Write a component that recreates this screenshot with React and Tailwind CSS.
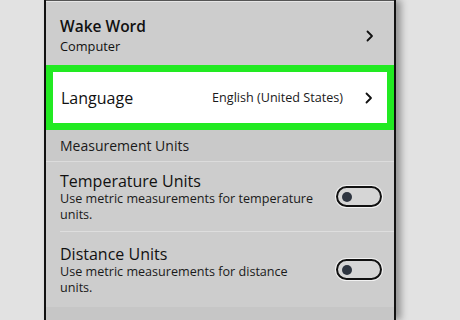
import React from "react";

const font = { fontFamily: '"Open Sans", "Noto Sans", sans-serif' };

const Chevron = () => (
  <svg width="8" height="12" viewBox="0 0 8 12" fill="none">
    <path d="M1.5 1.5 L6 6 L1.5 10.5" stroke="#111" strokeWidth="1.8" strokeLinecap="round" strokeLinejoin="round" />
  </svg>
);

const Toggle = () => (
  <div className="flex h-[21px] w-[46px] items-center rounded-full border-2 border-[#111] bg-[#d6d6d6] pl-[4px] shadow-[0_0_0_1px_#f2f2f2]">
    <div className="h-[10px] w-[10px] rounded-full bg-[#2e3540]" />
  </div>
);

const ToggleRow = ({ title, desc, last }) => (
  <div className={`flex items-center justify-between pr-[12px] ${last ? "h-[75px]" : "h-[70px] border-b border-[#dedede]"}`}>
    <div className="w-[262px] pt-[2px]">
      <div className="text-[16px] leading-[19px] text-[#111]">{title}</div>
      <div className="text-[12.6px] leading-[16.5px] text-[#1a1a1a]">{desc}</div>
    </div>
    <Toggle />
  </div>
);

export default function App() {
  return (
    <div className="h-[320px] w-[460px] overflow-hidden bg-[#e2e2e2] pl-[44px]" style={font}>
      <div className="h-full w-[352px] border-x-2 border-[#111] bg-[#cdcdcd] shadow-[5px_0_7px_rgba(0,0,0,0.35)]">
        <div className="h-[2px] border-b border-[#e6e6e6] bg-[#555]" />
        <div className="flex h-[63px] items-center justify-between pl-[14px] pr-[20px] pt-[4px]">
          <div>
            <div className="text-[15.5px] font-semibold leading-[21px] text-[#111]">Wake Word</div>
            <div className="text-[12.8px] leading-[18px] text-[#111]">Computer</div>
          </div>
          <Chevron />
        </div>
        <div className="h-[65px] border-[7px] border-[#22ea22]">
          <div className="flex h-full items-center justify-between bg-white pl-[8px] pr-[14px] pt-[1px]">
            <span className="text-[16px] text-[#111]">Language</span>
            <div className="flex items-center gap-[22px]">
              <span className="text-[12.6px] text-[#1a1a1a]">English (United States)</span>
              <Chevron />
            </div>
          </div>
        </div>
        <div className="flex h-[32px] items-center border-b border-[#dcdcdc] bg-[#c9c9c9] pl-[14px]">
          <span className="text-[14px] text-[#1a1a1a]">Measurement Units</span>
        </div>
        <div className="pl-[14px]">
          <ToggleRow title="Temperature Units" desc="Use metric measurements for temperature units." />
          <ToggleRow title="Distance Units" desc="Use metric measurements for distance units." last />
        </div>
        <div className="h-[20px] bg-[#c6c6c6]" />
      </div>
    </div>
  );
}
